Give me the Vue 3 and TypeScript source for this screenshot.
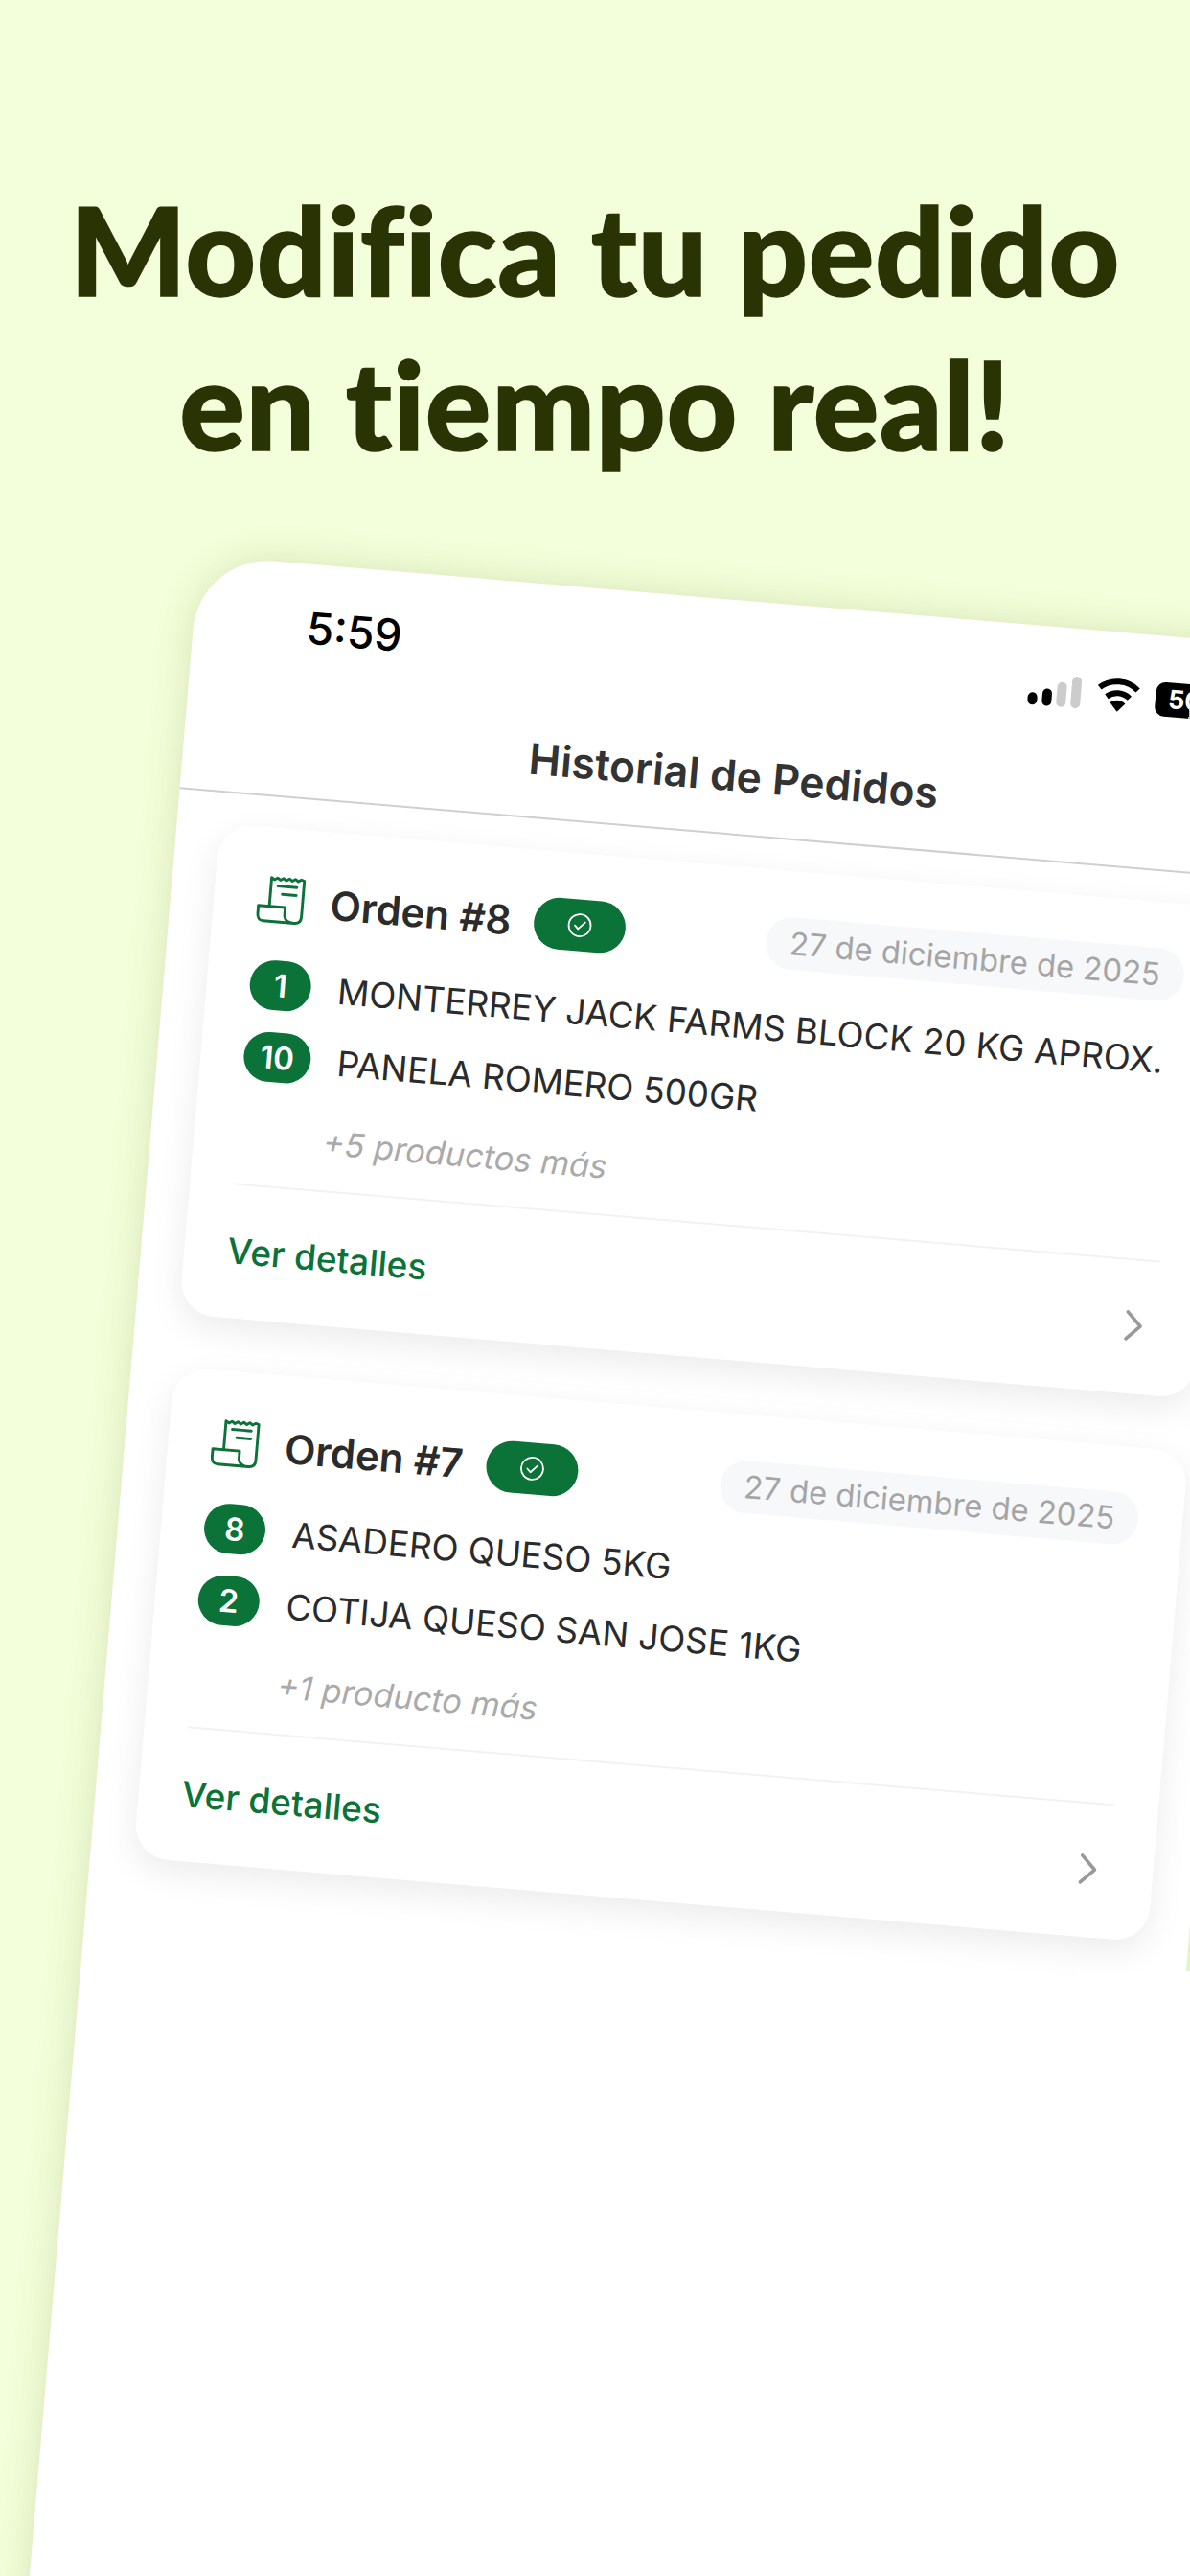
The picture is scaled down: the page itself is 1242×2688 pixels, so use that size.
<script setup lang="ts">
interface OrderItem {
  qty: number
  name: string
}

interface Order {
  id: number
  date: string
  items: OrderItem[]
  more: string
}

const orders: Order[] = [
  {
    id: 8,
    date: '27 de diciembre de 2025',
    items: [
      { qty: 1, name: 'MONTERREY JACK FARMS BLOCK 20 KG APROX.' },
      { qty: 10, name: 'PANELA ROMERO 500GR' },
    ],
    more: '+5 productos más',
  },
  {
    id: 7,
    date: '27 de diciembre de 2025',
    items: [
      { qty: 8, name: 'ASADERO QUESO 5KG' },
      { qty: 2, name: 'COTIJA QUESO SAN JOSE 1KG' },
    ],
    more: '+1 producto más',
  },
]
</script>

<template>
  <div class="page">
    <h1 class="headline">Modifica tu pedido<br />en tiempo real!</h1>

    <div class="phone">
      <div class="status-bar">
        <span class="time">5:59</span>
        <div class="status-icons">
          <div class="signal">
            <i class="bar on b1"></i>
            <i class="bar on b2"></i>
            <i class="bar b3"></i>
            <i class="bar b4"></i>
          </div>
          <svg class="wifi" viewBox="0 0 46 36" fill="none" stroke="#000" stroke-width="6">
            <path d="M3 11 C14 1 32 1 43 11" />
            <path d="M11 20 C18 14 28 14 35 20" />
            <path d="M15 26 L23 35 L31 26 C26 22 20 22 15 26 Z" fill="#000" stroke="none" />
          </svg>
          <div class="battery">50</div>
        </div>
      </div>

      <header class="nav-title">Historial de Pedidos</header>

      <main class="orders">
        <article v-for="order in orders" :key="order.id" class="card">
          <div class="card-head">
            <svg class="receipt" viewBox="0 0 50 48" fill="none" stroke="#0b7238" stroke-width="2.8" stroke-linejoin="round" stroke-linecap="round">
              <path d="M13 31 L13 2 L16 4 L19 2 L22 4 L25 2 L28 4 L31 2 L34 4 L37 2 L40 4 L43 2 L46 3 L46 39 C46 44 43 46 39 46" />
              <path d="M2 31 L29 31 L29 38 C29 43 33 46 39 46 L8 46 C4 46 2 43 2 39 Z" />
              <path d="M20 10 L39 10" />
              <path d="M25 18 L39 18" />
            </svg>
            <span class="order-no">Orden #{{ order.id }}</span>
            <span class="status-pill">
              <svg viewBox="0 0 26 26" fill="none" stroke="#fff" stroke-width="1.8" stroke-linecap="round" stroke-linejoin="round">
                <circle cx="13" cy="13" r="11.5" />
                <path d="M8 13.5 L11.5 17 L18.5 9.5" />
              </svg>
            </span>
            <span class="date">{{ order.date }}</span>
          </div>

          <ul class="items">
            <li v-for="item in order.items" :key="item.name" class="item">
              <span class="qty">{{ item.qty }}</span>
              <span class="name">{{ item.name }}</span>
            </li>
          </ul>
          <p class="more">{{ order.more }}</p>

          <div class="card-foot">
            <span class="details">Ver detalles</span>
            <svg class="chevron" viewBox="0 0 20 34" fill="none" stroke="#999" stroke-width="3.6" stroke-linecap="round" stroke-linejoin="round">
              <path d="M3 3 L17 17 L3 31" />
            </svg>
          </div>
        </article>
      </main>
    </div>

    <!-- la captura original tapa el borde derecho del teléfono -->
    <div class="cover"></div>
  </div>
</template>

<style>
html,
body {
  margin: 0;
  padding: 0;
}
</style>

<style scoped>
.page {
  position: relative;
  width: 1242px;
  height: 2688px;
  overflow: hidden;
  background: #f3ffda;
  font-family: Inter, 'Liberation Sans', sans-serif;
}

.headline {
  margin: 0;
  height: 579px;
  box-sizing: border-box;
  padding-top: 179px;
  text-align: center;
  font-family: Lato, 'Liberation Sans', sans-serif;
  font-size: 128px;
  line-height: 161px;
  font-weight: 900;
  letter-spacing: 0.7px;
  font-variant-ligatures: none;
  -webkit-text-stroke: 1.5px #2a3304;
  color: #2a3304;
}

.phone {
  width: 1150px;
  height: 2300px;
  margin-left: 208px;
  background: #fff;
  border-radius: 78px 78px 0 0;
  transform: rotate(4.8deg);
  transform-origin: 0 0;
  box-shadow: 0 0 40px rgba(70, 90, 0, 0.16);
}

.status-bar {
  display: flex;
  align-items: center;
  justify-content: space-between;
  height: 132px;
  padding: 0 81px 0 118px;
}

.time {
  font-size: 46px;
  font-weight: 500;
  color: #000;
}

.status-icons {
  display: flex;
  align-items: center;
  gap: 16px;
}

.signal {
  display: flex;
  align-items: flex-end;
  gap: 5px;
  height: 34px;
}

.bar {
  display: block;
  width: 10px;
  border-radius: 5px;
  background: #ccc;
}

.bar.on {
  background: #000;
}

.b1 {
  height: 13px;
}

.b2 {
  height: 18px;
}

.b3 {
  height: 26px;
}

.b4 {
  height: 33px;
}

.wifi {
  width: 46px;
  height: 36px;
}

.battery {
  width: 62px;
  height: 36px;
  border-radius: 10px;
  background: linear-gradient(90deg, #000 36px, #bbb 36px);
  color: #fff;
  font-size: 27px;
  font-weight: 700;
  line-height: 36px;
  text-align: center;
}

.nav-title {
  display: flex;
  align-items: center;
  justify-content: center;
  height: 113px;
  padding-bottom: 10px;
  box-sizing: border-box;
  border-bottom: 2px solid #cfcfcf;
  font-size: 44.5px;
  font-weight: 600;
  color: #333;
}

.orders {
  display: flex;
  flex-direction: column;
  gap: 55px;
  padding: 32px 43px 0 45px;
}

.card {
  height: 514px;
  box-sizing: border-box;
  padding: 45px 46px 0 45px;
  background: #fff;
  border-radius: 36px;
  box-shadow: 0 12px 36px rgba(0, 0, 0, 0.08);
}

.card-head {
  display: flex;
  align-items: center;
  height: 60px;
}

.receipt {
  flex: none;
  width: 52px;
  height: 50px;
  margin-right: 25px;
}

.order-no {
  font-size: 42px;
  font-weight: 600;
  color: #2b2b2b;
}

.status-pill {
  display: flex;
  align-items: center;
  justify-content: center;
  width: 96px;
  height: 54px;
  margin-left: 24px;
  border-radius: 27px;
  background: #0b7238;
}

.status-pill svg {
  width: 26px;
  height: 26px;
}

.date {
  margin-left: auto;
  padding: 0 25px;
  height: 55px;
  line-height: 55px;
  border-radius: 28px;
  background: #f7f8fa;
  font-size: 32.8px;
  color: #a5a5a5;
}

.items {
  display: flex;
  flex-direction: column;
  gap: 25px;
  margin: 34px 0 0;
  padding: 0;
  list-style: none;
}

.item {
  display: flex;
  align-items: center;
  gap: 28px;
  height: 50px;
}

.qty {
  flex: none;
  box-sizing: border-box;
  min-width: 64px;
  padding: 0 17px;
  height: 52px;
  line-height: 52px;
  border-radius: 26px;
  background: #0b7238;
  color: #fff;
  font-size: 33px;
  font-weight: 600;
  text-align: center;
}

.name {
  font-size: 36.7px;
  color: #2b2b2b;
  white-space: nowrap;
}

.more {
  margin: 39px 0 0;
  padding-left: 90px;
  font-size: 34.4px;
  line-height: 42px;
  font-style: italic;
  color: #aaa;
}

.card-foot {
  display: flex;
  align-items: center;
  justify-content: space-between;
  margin-top: 28px;
  height: 136px;
  padding: 0 12px 0 0;
  border-top: 2px solid #f2f2f2;
}

.details {
  font-size: 37px;
  font-weight: 500;
  color: #0b7238;
}

.chevron {
  width: 20px;
  height: 34px;
}

.cover {
  position: absolute;
  right: 0;
  top: 2057px;
  width: 120px;
  height: 631px;
  background: #fff;
}
</style>
